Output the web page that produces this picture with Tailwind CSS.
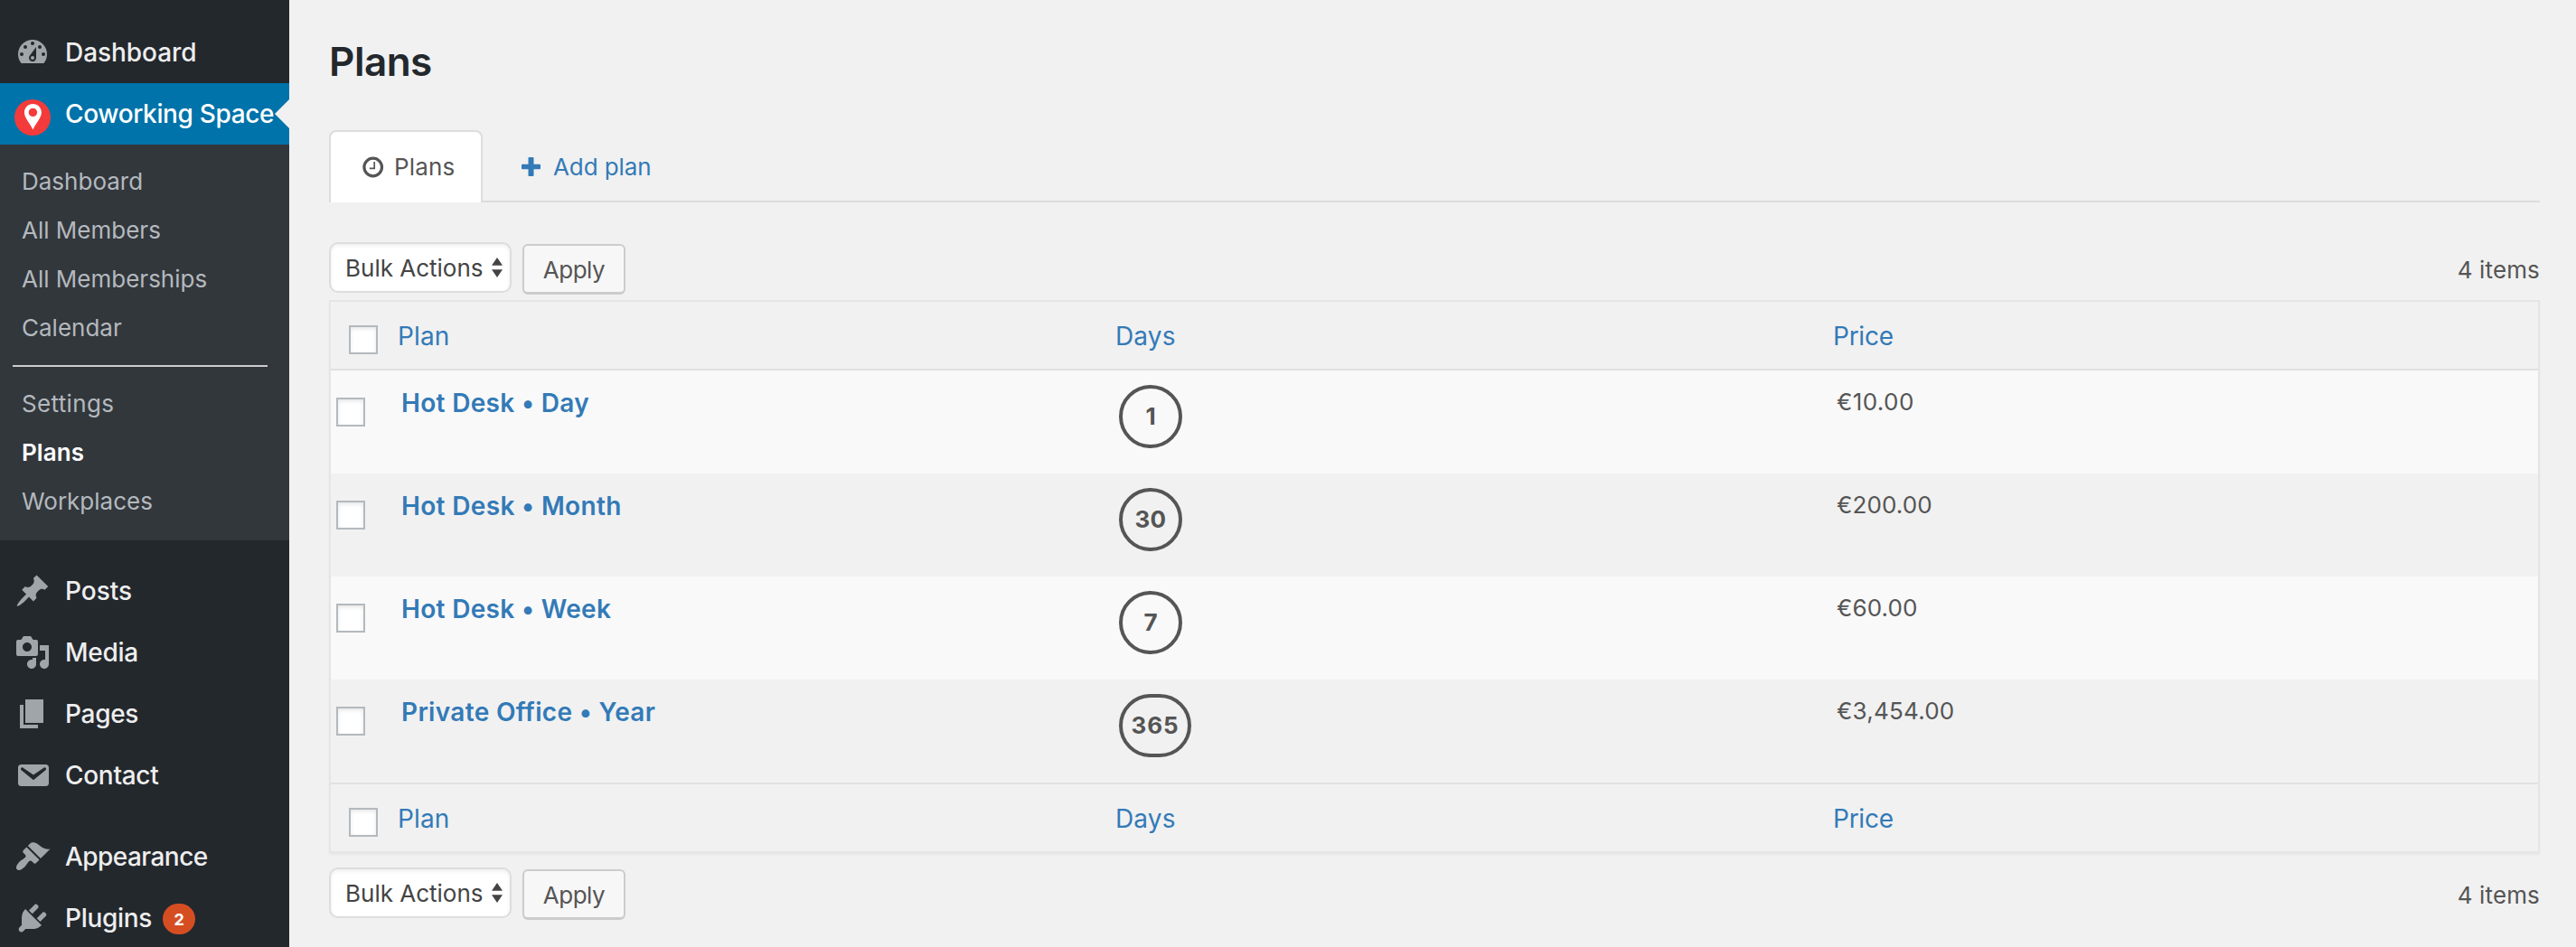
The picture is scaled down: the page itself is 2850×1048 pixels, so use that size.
<!DOCTYPE html>
<html lang="en">
<head>
<meta charset="utf-8">
<title>Plans</title>
<script src="https://cdn.jsdelivr.net/npm/@tailwindcss/browser@4"></script>
</head>
<body class="flex h-[1048px] overflow-hidden bg-[#f1f1f1] font-['Inter',sans-serif] text-[26px] text-[#555]">

<aside class="flex h-full w-[320px] shrink-0 flex-col overflow-hidden bg-[#23282d] pt-6 text-[28px] font-medium tracking-[-0.3px] text-[#eee]">
  <a class="flex h-[68px] shrink-0 items-center pl-4 tracking-[-0.05px]">
    <svg class="mr-4 size-10 shrink-0" viewBox="0 0 20 20" fill="#a0a5aa">
      <path d="M3.76 16h12.48c1.1-1.37 1.76-3.11 1.76-5 0-4.42-3.58-8-8-8s-8 3.58-8 8c0 1.89.66 3.63 1.76 5z"/>
      <g fill="#23282d"><circle cx="10" cy="5" r="1"/><circle cx="6" cy="7" r="1"/><circle cx="14" cy="7" r="1"/><circle cx="4" cy="11" r="1"/><circle cx="16" cy="11" r="1"/><path d="M12 7v6a2 2 0 1 1-3.8-.85z"/></g>
      <circle cx="10" cy="13" r="1"/>
    </svg>Dashboard</a>
  <a class="relative flex h-[68px] shrink-0 items-center bg-[#0073aa] pl-4 tracking-[-0.36px] whitespace-nowrap text-white">
    <svg class="mt-2 mr-4 size-10 shrink-0" viewBox="0 0 40 40">
      <circle cx="20" cy="20" r="20" fill="#f33b3b"/>
      <path fill="#fff" fill-rule="evenodd" d="M20.400 5c5.300 0 9.500 4.200 9.500 9.500 0 5.500-6.500 12.500-9.500 19-3-6.500-9.500-13.500-9.500-19 0-5.300 4.200-9.500 9.500-9.500zm0 4.700a4.700 4.700 0 1 0 0 9.400 4.700 4.700 0 0 0 0-9.400z"/>
    </svg>Coworking Space
    <svg class="absolute top-[18px] right-0 h-8 w-4" viewBox="0 0 16 32"><path fill="#f1f1f1" d="M16 0v32L0 16z"/></svg>
  </a>
  <nav class="h-[438px] shrink-0 bg-[#32373c] pt-[14px] text-[26px] leading-[54px] font-normal tracking-normal text-[#b4b9be]">
    <div class="pl-6">Dashboard</div>
    <div class="pl-6">All Members</div>
    <div class="pl-6">All Memberships</div>
    <div class="pl-6">Calendar</div>
    <div class="mt-[14px] mr-6 mb-[14px] ml-[14px] h-[2px] bg-[#ccc]"></div>
    <div class="pl-6 tracking-[0.35px]">Settings</div>
    <div class="pl-6 font-semibold tracking-[0.1px] text-white">Plans</div>
    <div class="pl-6">Workplaces</div>
  </nav>
  <a class="mt-[22px] flex h-[68px] shrink-0 items-center pl-4 tracking-normal"><svg class="mr-4 size-10" viewBox="0 0 20 20" fill="#a0a5aa"><path d="M10.44 3.02l1.82-1.82 6.36 6.35-1.83 1.82c-1.05-.68-2.48-.57-3.41.36l-.75.75c-.92.93-1.04 2.35-.35 3.41l-1.83 1.82-2.41-2.41-2.8 2.79c-.42.42-3.38 2.71-3.8 2.29s1.86-3.39 2.28-3.81l2.79-2.79L4.1 9.36l1.83-1.82c1.05.69 2.48.57 3.4-.36l.75-.75c.93-.92 1.05-2.35.36-3.41z"/></svg>Posts</a>
  <a class="flex h-[68px] shrink-0 items-center pl-4"><svg class="mr-4 size-10" viewBox="0 0 20 20" fill="#a0a5aa"><path d="M13 11V4c0-.55-.45-1-1-1h-1.670L9 1H5L3.670 3H2c-.55 0-1 .45-1 1v7c0 .55.45 1 1 1h10c.55 0 1-.45 1-1zM7 4.500c1.380 0 2.500 1.120 2.500 2.500S8.380 9.500 7 9.500 4.500 8.380 4.500 7 5.620 4.500 7 4.500zM14 6h5v10.500c0 1.380-1.120 2.500-2.500 2.500S14 17.880 14 16.500s1.120-2.500 2.500-2.500c.17 0 .34.02.5.05V9h-3V6zm-4 8.050V13h2v3.500c0 1.380-1.120 2.500-2.500 2.500S7 17.880 7 16.500 8.120 14 9.500 14c.17 0 .34.02.5.05z"/></svg>Media</a>
  <a class="flex h-[68px] shrink-0 items-center pl-4"><svg class="mr-4 size-10" viewBox="0 0 20 20" fill="#a0a5aa"><path d="M6 15V2h10v13H6zm-1 1h8v2H3V5h2v11z"/></svg>Pages</a>
  <a class="flex h-[68px] shrink-0 items-center pl-4"><svg class="mr-4 size-10" viewBox="0 0 20 20" fill="#a0a5aa"><path d="M3.870 4h13.250C18.370 4 19 4.590 19 5.790v8.420c0 1.190-.63 1.790-1.880 1.790H3.870c-1.250 0-1.880-.6-1.880-1.790V5.790c0-1.200.63-1.790 1.880-1.790zm6.620 8.600l6.740-5.530c.24-.2.43-.66.13-1.070-.29-.41-.82-.42-1.170-.17l-5.700 3.860L4.800 5.830c-.35-.25-.88-.24-1.170.17-.3.41-.11.87.13 1.070z"/></svg>Contact</a>
  <a class="mt-[22px] flex h-[68px] shrink-0 items-center pl-4 tracking-[-0.55px]"><svg class="mr-4 size-10" viewBox="0 0 20 20" fill="#a0a5aa"><path d="M14.480 11.060L7.410 3.990l1.500-1.500c.5-.56 2.300-.47 3.510.32 1.210.8 1.430 1.280 2.910 2.100 1.180.64 2.450 1.260 4.450.85zm-.71.71L6.700 4.700 4.930 6.470c-.39.39-.39 1.020 0 1.410l1.060 1.060c.39.39.39 1.030 0 1.420-.6.6-1.430 1.110-2.210 1.690-.35.26-.7.53-1.010.84C1.430 14.230.4 16.080 1.400 17.070c.99 1 2.840-.03 4.180-1.360.31-.31.58-.66.85-1.020.57-.78 1.080-1.610 1.690-2.210.39-.39 1.020-.39 1.410 0l1.060 1.060c.39.39 1.020.39 1.410 0z"/></svg>Appearance</a>
  <a class="flex h-[68px] shrink-0 items-center pl-4"><svg class="mr-4 size-10" viewBox="0 0 20 20" fill="#a0a5aa"><path d="M13.110 4.360L9.870 7.600 8 5.730l3.240-3.240c.35-.34 1.050-.2 1.560.32.52.51.66 1.210.31 1.550zm-8 1.770l.91-1.120 9.010 9.010-1.190.84c-.71.71-2.630 1.160-3.820 1.160H6.140L4.900 17.260c-.59.59-1.540.59-2.120 0-.59-.58-.59-1.530 0-2.120l1.240-1.240v-3.880c0-1.130.4-3.190 1.090-3.890zm7.260 3.970l3.240-3.240c.34-.35 1.040-.21 1.550.31.52.51.66 1.210.31 1.550l-3.240 3.250z"/></svg>Plugins<span class="mt-[2px] ml-3 flex h-[34px] w-9 items-center justify-center rounded-[17px] bg-[#d54e21] pt-px text-[18px] font-bold tracking-normal text-white">2</span></a>
</aside>

<main class="flex w-[2490px] flex-col pl-11">
  <h1 class="mt-[38px] h-[60px] text-[44px] leading-[60px] font-semibold tracking-[-0.5px] text-[#23282d]">Plans</h1>

  <div class="mt-[46px] flex h-20 w-full">
    <a class="flex w-[170px] items-center rounded-t-lg border-2 border-b-0 border-[#ddd] bg-white pb-px pl-[35px] tracking-[0.15px]">
      <svg class="mr-[11px] size-6" viewBox="0 0 24 24" fill="none" stroke="#555"><circle cx="11.700" cy="12" r="9.800" stroke-width="3.200"/><path d="M13.200 6v7.400H7.800" stroke-width="1.700"/></svg>Plans</a>
    <a class="flex flex-1 items-center border-b-2 border-[#ddd] pt-[3px] pl-[43px] tracking-[-0.1px] text-[#337ab7]">
      <svg class="-mt-px mr-[14px] size-[21px]" viewBox="0 0 21 21" fill="#337ab7"><path d="M8.500 0h4a1 1 0 0 1 1 1v6.700H20a1 1 0 0 1 1 1v3.600a1 1 0 0 1-1 1h-6.500V20a1 1 0 0 1-1 1h-4a1 1 0 0 1-1-1v-6.700H1a1 1 0 0 1-1-1V8.700a1 1 0 0 1 1-1h6.500V1a1 1 0 0 1 1-1z"/></svg>Add plan</a>
  </div>

  <div class="mt-11 flex h-[64px] items-start">
    <div class="flex h-14 w-[202px] items-center rounded-[10px] border-2 border-[#ddd] bg-white pl-4 whitespace-nowrap text-[#444] shadow-[inset_0_2px_4px_rgba(0,0,0,0.07)]">Bulk Actions<svg class="ml-[9px] h-[22px] w-3 shrink-0" viewBox="0 0 12 22" fill="#444"><path d="M6 0l6 8.800H0zM0 13.300h12L6 22z"/></svg></div>
    <div class="mt-[2px] ml-3 flex h-14 w-[114px] items-center justify-center rounded-md border-2 border-b-[3px] border-[#ccc] bg-[#f7f7f7] pt-px tracking-[-0.5px]">Apply</div>
    <div class="mt-[2px] ml-auto leading-[57px] tracking-[0.15px]">4 items</div>
  </div>

  <section class="h-[612px] border-2 border-[#e5e5e5] shadow-[0_2px_2px_rgba(0,0,0,0.04)]">
    <div class="flex h-[76px] border-b-2 border-[#e1e1e1] text-[28px] leading-[76px] tracking-[0.15px] text-[#337ab7]">
      <div class="flex w-[74px] pt-[26px] pl-5"><span class="size-8 border-2 border-[#b4b9be] bg-white shadow-[inset_0_2px_4px_rgba(0,0,0,0.1)]"></span></div>
      <div class="w-[794px]">Plan</div><div class="w-[794px]">Days</div><div class="tracking-[-0.25px]">Price</div>
    </div>
    <div class="flex h-[114px] bg-[#f9f9f9]">
      <div class="w-[78px] pt-[30px] pl-[6px]"><span class="block size-8 border-2 border-[#b4b9be] bg-white shadow-[inset_0_2px_4px_rgba(0,0,0,0.1)]"></span></div>
      <div class="w-[794px] text-[28px] leading-[72px] font-semibold tracking-[0.32px] text-[#337ab7]">Hot Desk • Day</div>
      <div class="w-[794px] pt-4"><span class="flex size-[70px] items-center justify-center rounded-[35px] border-4 border-[#555] pb-px font-bold">1</span></div>
      <div class="leading-[69px] tracking-[0.4px]">€10.00</div>
    </div>
    <div class="flex h-[114px]">
      <div class="w-[78px] pt-[30px] pl-[6px]"><span class="block size-8 border-2 border-[#b4b9be] bg-white shadow-[inset_0_2px_4px_rgba(0,0,0,0.1)]"></span></div>
      <div class="w-[794px] text-[28px] leading-[72px] font-semibold tracking-[0.34px] text-[#337ab7]">Hot Desk • Month</div>
      <div class="w-[794px] pt-4"><span class="flex size-[70px] items-center justify-center rounded-[35px] border-4 border-[#555] pb-px font-bold tracking-[0.4px]">30</span></div>
      <div class="leading-[69px] tracking-[0.1px]">€200.00</div>
    </div>
    <div class="flex h-[114px] bg-[#f9f9f9]">
      <div class="w-[78px] pt-[30px] pl-[6px]"><span class="block size-8 border-2 border-[#b4b9be] bg-white shadow-[inset_0_2px_4px_rgba(0,0,0,0.1)]"></span></div>
      <div class="w-[794px] text-[28px] leading-[72px] font-semibold tracking-[0.32px] text-[#337ab7]">Hot Desk • Week</div>
      <div class="w-[794px] pt-4"><span class="flex size-[70px] items-center justify-center rounded-[35px] border-4 border-[#555] pb-px font-bold">7</span></div>
      <div class="leading-[69px] tracking-[0.1px]">€60.00</div>
    </div>
    <div class="flex h-[114px]">
      <div class="w-[78px] pt-[30px] pl-[6px]"><span class="block size-8 border-2 border-[#b4b9be] bg-white shadow-[inset_0_2px_4px_rgba(0,0,0,0.1)]"></span></div>
      <div class="w-[794px] text-[28px] leading-[72px] font-semibold tracking-[0.33px] text-[#337ab7]">Private Office • Year</div>
      <div class="w-[794px] pt-4"><span class="flex h-[70px] w-20 items-center justify-center rounded-[35px] border-4 border-[#555] pb-px font-bold tracking-[0.9px]">365</span></div>
      <div class="leading-[69px] tracking-[0.22px]">€3,454.00</div>
    </div>
    <div class="flex h-[76px] border-t-2 border-[#e1e1e1] text-[28px] leading-[76px] tracking-[0.15px] text-[#337ab7]">
      <div class="flex w-[74px] pt-[26px] pl-5"><span class="size-8 border-2 border-[#b4b9be] bg-white shadow-[inset_0_2px_4px_rgba(0,0,0,0.1)]"></span></div>
      <div class="w-[794px]">Plan</div><div class="w-[794px]">Days</div><div class="tracking-[-0.25px]">Price</div>
    </div>
  </section>

  <div class="mt-4 flex h-[64px] items-start">
    <div class="flex h-14 w-[202px] items-center rounded-[10px] border-2 border-[#ddd] bg-white pl-4 whitespace-nowrap text-[#444] shadow-[inset_0_2px_4px_rgba(0,0,0,0.07)]">Bulk Actions<svg class="ml-[9px] h-[22px] w-3 shrink-0" viewBox="0 0 12 22" fill="#444"><path d="M6 0l6 8.800H0zM0 13.300h12L6 22z"/></svg></div>
    <div class="mt-[2px] ml-3 flex h-14 w-[114px] items-center justify-center rounded-md border-2 border-b-[3px] border-[#ccc] bg-[#f7f7f7] pt-px tracking-[-0.5px]">Apply</div>
    <div class="mt-[2px] ml-auto leading-[57px] tracking-[0.15px]">4 items</div>
  </div>
</main>
</body>
</html>
